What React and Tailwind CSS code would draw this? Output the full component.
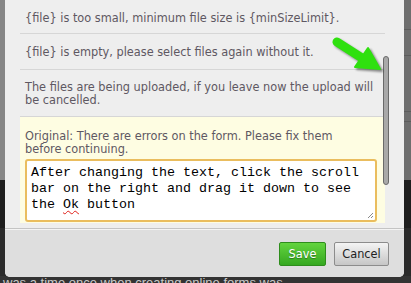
const messages = [
  '{file} is too small, minimum file size is {minSizeLimit}.',
  '{file} is empty, please select files again without it.',
  'The files are being uploaded, if you leave now the upload will be cancelled.',
]

const Arrow = () => (
  <svg className="absolute left-[326px] top-[34px] drop-shadow-[2px_2px_1px_rgba(0,0,0,0.45)]" width="60" height="42" viewBox="326 34 60 42">
    <line x1="337" y1="42" x2="362" y2="58" stroke="#2fe00f" strokeWidth="9" strokeLinecap="round" />
    <polygon points="368,48 355,67 380,69" fill="#2fe00f" stroke="#2fe00f" strokeWidth="2" strokeLinejoin="round" />
  </svg>
)

const App = () => {
  return (
    <div className="relative w-[411px] h-[283px] overflow-hidden bg-[#2b2b2b]" style={{ fontFamily: '"DejaVu Sans Condensed", "DejaVu Sans", sans-serif' }}>
      {/* page behind the dialog */}
      <div className="flex flex-col">
        <div className="h-[180px] bg-[#868686] flex justify-between">
          <div className="w-[5px]" />
          <div className="w-[7px] bg-[#6e6e6e] flex flex-col">
            <div className="h-[30px] border-b border-[#5c5c5c]" />
            <div className="h-[26px] border-b border-[#5c5c5c]" />
            <div className="h-[56px] border-b border-[#5c5c5c]" />
            <div className="h-[10px] border-b border-[#5c5c5c]" />
          </div>
        </div>
        <div className="h-[48px] bg-[#1e1e1e]" />
        <div className="h-[48px] bg-[#2a2a2a]" />
        <div className="h-[9px] bg-[#333] text-[13px] leading-[14px] text-[#c9c9c9] pl-[3px] whitespace-nowrap" style={{ fontFamily: '"Liberation Sans", Arial, sans-serif' }}>
          was a time once when creating online forms was
        </div>
      </div>

      {/* dialog */}
      <div className="absolute left-[5px] top-0 w-[399px] h-[277px] rounded-b-[5px] bg-[#eeeeee] flex flex-col overflow-hidden">
        <div className="relative h-[229px] pl-[15px] pr-[19px] border-b border-[#c4c4c4]">
          <div className="text-[12.6px] leading-[13px] text-[#5e5862]">
            {messages.map((m, i) => (
              <div
                key={i}
                className={`border-b border-[#d6d6d6] pl-[5px] ${i === 0 ? 'pt-[11px] pb-[9px]' : i === 1 ? 'py-[11px]' : 'py-[10px]'}`}
              >
                {m}
              </div>
            ))}
            <div className="bg-[#fefde2] pl-[5px] pr-[8px] pt-[12px] pb-[1px]">
              <p>Original: There are errors on the form. Please fix them<br />before continuing.</p>
              <div className="relative mt-[4px] h-[63px] border-2 border-[#eabd5e] rounded-[3px] bg-white px-[4px] pt-[4px] text-[13.33px] leading-[16px] text-black whitespace-pre" style={{ fontFamily: '"Liberation Mono", "Courier New", monospace' }}>
                {'After changing the text, click the scroll\nbar on the right and drag it down to see\nthe '}
                <span className="underline decoration-wavy decoration-[#e0201a] decoration-1 underline-offset-2">Ok</span>
                {' button'}
                <svg className="absolute right-[1px] bottom-[1px]" width="7" height="7" viewBox="0 0 7 7">
                  <path d="M6 1 L1 6 M6 4 L4 6" stroke="#8a8a8a" strokeWidth="1" />
                </svg>
              </div>
            </div>
          </div>
          <div className="absolute left-[378px] top-[56px] w-[6px] h-[129px] rounded-full bg-[#a9a9a9] border border-[#6a6a6a]" />
        </div>
        <div className="flex-1 bg-[#dedede] border-t border-[#f4f4f4] flex justify-end items-start gap-[8px] pt-[12px] pr-[15px] text-[12.6px]">
          <button className="w-[47px] h-[24px] rounded-[2px] border border-[#2e8d1c] bg-linear-to-b from-[#62d43e] to-[#35a820] text-white [text-shadow:0_1px_1px_rgba(0,0,0,0.35)]">
            Save
          </button>
          <button className="w-[55px] h-[24px] rounded-[2px] border border-[#8c8c8c] bg-linear-to-b from-[#f4f4f4] to-[#c6c6c6] text-[#222]">
            Cancel
          </button>
        </div>
      </div>
      <Arrow />
    </div>
  )
}

export default App
